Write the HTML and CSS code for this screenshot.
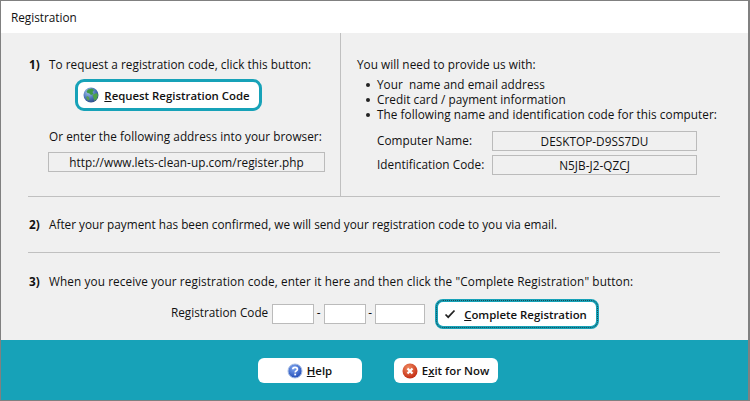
FILE: index.html
```html
<!DOCTYPE html>
<html lang="en">
<head>
  <meta charset="UTF-8">
  <title>Registration</title>
  <link rel="stylesheet" href="styles.css">
</head>
<body>
  <div class="window">
    <div class="title-bar">Registration</div>

    <div class="content">
      <!-- Step 1 and what the user has to provide -->
      <div class="top-row">
        <div class="left-col">
          <div class="step">
            <span class="step-num">1)</span>
            <span>To request a registration code, click this button:</span>
          </div>
          <button class="btn btn-request" type="button">
            <svg class="icon" viewBox="0 0 16 16">
              <defs>
                <radialGradient id="sea" cx="35%" cy="30%" r="75%">
                  <stop offset="0" stop-color="#a9c6ee"/>
                  <stop offset="0.6" stop-color="#4a74b8"/>
                  <stop offset="1" stop-color="#2c4a86"/>
                </radialGradient>
              </defs>
              <circle cx="8" cy="8" r="7.5" fill="url(#sea)"/>
              <path d="M5 2.5 9 1.5 11 3 9.5 5 10.5 7 8 8 6.5 6.5 4.5 6 3.5 4.5Z" fill="#3f9a45"/>
              <path d="M9.5 8 13.5 6 15 8 14 11.5 11.5 14 10.5 11Z" fill="#4fa348"/>
              <path d="M4 9 6 10 6.5 13 5 13.5 3 11Z" fill="#5a9f55"/>
            </svg>
            <span><u>R</u>equest Registration Code</span>
          </button>
          <div class="browser-note">Or enter the following address into your browser:</div>
          <div class="read-box url-box">http://www.lets-clean-up.com/register.php</div>
        </div>

        <div class="right-col">
          <div>You will need to provide us with:</div>
          <ul class="needs">
            <li>Your &nbsp;name and email address</li>
            <li>Credit card / payment information</li>
            <li>The following name and identification code for this computer:</li>
          </ul>
          <div class="id-row">
            <span class="id-label">Computer Name:</span>
            <div class="read-box id-box">DESKTOP-D9SS7DU</div>
          </div>
          <div class="id-row">
            <span class="id-label">Identification Code:</span>
            <div class="read-box id-box">N5JB-J2-QZCJ</div>
          </div>
        </div>
      </div>

      <div class="section section-two">
        <div class="step">
          <span class="step-num">2)</span>
          <span>After your payment has been confirmed, we will send your registration code to you via email.</span>
        </div>
      </div>

      <div class="section section-three">
        <div class="step">
          <span class="step-num">3)</span>
          <span>When you receive your registration code, enter it here and then click the "Complete Registration" button:</span>
        </div>
        <div class="code-row">
          <span class="code-label">Registration Code</span>
          <input class="code-input" type="text">
          <span class="dash">-</span>
          <input class="code-input" type="text">
          <span class="dash">-</span>
          <input class="code-input code-input-wide" type="text">
          <button class="btn btn-complete" type="button">
            <svg class="check" viewBox="0 0 12 10">
              <path d="M1.5 5.5 4.2 8.2 10.5 1.5" fill="none" stroke="#222" stroke-width="1.7"/>
            </svg>
            <span><u>C</u>omplete Registration</span>
          </button>
        </div>
      </div>
    </div>

    <div class="footer">
      <button class="btn btn-footer" type="button">
        <svg class="icon" viewBox="0 0 16 16">
          <defs>
            <radialGradient id="blue" cx="40%" cy="30%" r="75%">
              <stop offset="0" stop-color="#7ea6f0"/>
              <stop offset="1" stop-color="#1c46b4"/>
            </radialGradient>
          </defs>
          <circle cx="8" cy="8" r="7" fill="url(#blue)" stroke="#a9bfe6"/>
          <path d="M5.8 6.2C5.8 3.8 10.4 3.8 10.4 6.2 10.4 8 8.2 7.8 8.2 9.6" fill="none" stroke="#fff" stroke-width="1.7"/>
          <rect x="7.3" y="10.6" width="1.8" height="1.8" fill="#fff"/>
        </svg>
        <span><u>H</u>elp</span>
      </button>
      <button class="btn btn-footer" type="button">
        <svg class="icon" viewBox="0 0 16 16">
          <defs>
            <radialGradient id="red" cx="40%" cy="30%" r="75%">
              <stop offset="0" stop-color="#f08a60"/>
              <stop offset="1" stop-color="#c0260e"/>
            </radialGradient>
          </defs>
          <circle cx="8" cy="8" r="7.5" fill="url(#red)"/>
          <path d="M5.5 5.5 10.5 10.5M10.5 5.5 5.5 10.5" stroke="#fff" stroke-width="2.2"/>
        </svg>
        <span>E<u>x</u>it for Now</span>
      </button>
    </div>
  </div>
</body>
</html>
```

FILE: styles.css
```css
* {
  box-sizing: border-box;
}
body {
  margin: 0;
  font-family: "Open Sans", "Noto Sans", sans-serif;
  font-size: 11.78px;
  color: #111;
}
.window {
  width: 750px;
  height: 401px;
  border: 1px solid #808080;
  border-right-width: 2px;
  display: flex;
  flex-direction: column;
  background: #f0f0f0;
}
.title-bar {
  height: 32px;
  background: #fff;
  padding: 9px 0 0 10px;
  line-height: 14px;
}
.content {
  flex: 1;
  padding: 0 28px 0 27px;
}
.top-row {
  display: flex;
  height: 164px;
  border-bottom: 1px solid #c0c0c0;
  letter-spacing: 0.04px;
}
.left-col {
  width: 313px;
  padding-top: 23px;
  border-right: 1px solid #c0c0c0;
}
.right-col {
  padding: 23px 0 0 16px;
  line-height: 16px;
}
.step {
  display: flex;
  line-height: 16px;
}
.step-num {
  width: 21px;
  padding-left: 1px;
  font-weight: bold;
}
.btn {
  display: flex;
  align-items: center;
  justify-content: center;
  gap: 5px;
  background: #fff;
  border: none;
  border-radius: 6px;
  font-family: inherit;
  font-size: 11.4px;
  font-weight: 600;
  color: #111;
  padding: 0;
  letter-spacing: 0;
}
.btn-request {
  width: 187px;
  height: 32px;
  margin: 7px 0 0 47px;
  padding-right: 4px;
  border: 3px solid #17a2b8;
  border-radius: 9px;
}
.btn-complete {
  width: 164px;
  height: 30px;
  margin-left: 10px;
  padding-right: 3px;
  border: 3px solid #17a2b8;
  border-radius: 8px;
  outline: 1px dotted #1a4a55;
  outline-offset: -2px;
}
.btn-footer {
  width: 104px;
  height: 25px;
  gap: 4px;
}
.icon {
  width: 16px;
  height: 16px;
}
.check {
  width: 12px;
  height: 10px;
  margin-right: 3px;
}
.browser-note {
  margin: 17px 0 0 21px;
  line-height: 16px;
}
.read-box {
  border: 1px solid #bbb;
  text-align: center;
  height: 20px;
  line-height: 18px;
}
.url-box {
  width: 277px;
  margin: 8px 0 0 20px;
}
.needs {
  list-style: none;
  margin: 5px 0 0;
  padding: 0 0 0 20px;
  line-height: 15px;
}
.needs li {
  position: relative;
}
.needs li::before {
  content: "";
  position: absolute;
  left: -11px;
  top: 6px;
  width: 4px;
  height: 4px;
  border-radius: 50%;
  background: #222;
}
.id-row {
  display: flex;
  margin-bottom: 4px;
  padding-left: 20px;
}
.needs + .id-row {
  margin-top: 9px;
}
.id-label {
  width: 115px;
  padding-top: 1px;
}
.id-box {
  width: 205px;
}
.section {
  border-bottom: 1px solid #c0c0c0;
}
.section-two {
  height: 56px;
  padding-top: 19px;
}
.section-three {
  border-bottom: none;
  padding-top: 20px;
}
.section-three .step {
  letter-spacing: 0.11px;
}
.code-row {
  display: flex;
  align-items: flex-start;
  margin: 10px 0 0 143px;
}
.code-label {
  width: 101px;
  margin-top: 5px;
  line-height: 16px;
  white-space: nowrap;
}
.code-input {
  width: 42px;
  height: 20px;
  margin-top: 5px;
  border: 1px solid #bbb;
  background: #fff;
  padding: 0;
}
.code-input-wide {
  width: 50px;
}
.dash {
  width: 9.5px;
  margin-top: 5px;
  text-align: center;
  line-height: 16px;
}
.footer {
  height: 60px;
  background: #17a2b8;
  display: flex;
  justify-content: center;
  gap: 32px;
  padding: 18px 0 0 6px;
}
```
